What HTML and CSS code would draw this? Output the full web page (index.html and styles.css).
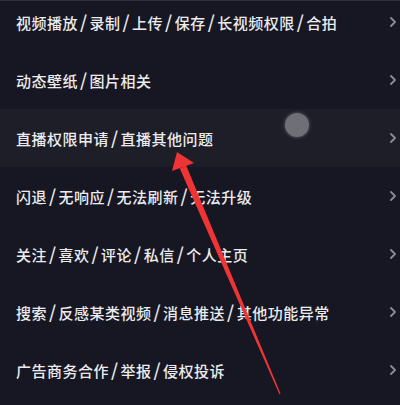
FILE: index.html
```
<!DOCTYPE html>
<html lang="zh-CN">
<head>
  <meta charset="UTF-8" />
  <meta name="viewport" content="width=device-width, initial-scale=1" />
  <title>反馈问题</title>
  <link rel="stylesheet" href="styles.css">
</head>
<body>
  <div class="screen">
    <ul class="list">
      <li class="row"><span class="label">视频播放<i>/</i>录制<i>/</i>上传<i>/</i>保存<i>/</i>长视频权限<i>/</i>合拍</span><svg class="chev" viewBox="0 0 6 10"><polyline points="1,1 5,5 1,9" /></svg></li>
      <li class="row"><span class="label">动态壁纸<i>/</i>图片相关</span><svg class="chev" viewBox="0 0 6 10"><polyline points="1,1 5,5 1,9" /></svg></li>
      <li class="row active"><span class="label">直播权限申请<i>/</i>直播其他问题</span><svg class="chev" viewBox="0 0 6 10"><polyline points="1,1 5,5 1,9" /></svg></li>
      <li class="row"><span class="label">闪退<i>/</i>无响应<i>/</i>无法刷新<i>/</i>无法升级</span><svg class="chev" viewBox="0 0 6 10"><polyline points="1,1 5,5 1,9" /></svg></li>
      <li class="row"><span class="label">关注<i>/</i>喜欢<i>/</i>评论<i>/</i>私信<i>/</i>个人主页</span><svg class="chev" viewBox="0 0 6 10"><polyline points="1,1 5,5 1,9" /></svg></li>
      <li class="row"><span class="label">搜索<i>/</i>反感某类视频<i>/</i>消息推送<i>/</i>其他功能异常</span><svg class="chev" viewBox="0 0 6 10"><polyline points="1,1 5,5 1,9" /></svg></li>
      <li class="row"><span class="label">广告商务合作<i>/</i>举报<i>/</i>侵权投诉</span><svg class="chev" viewBox="0 0 6 10"><polyline points="1,1 5,5 1,9" /></svg></li>
    </ul>

    <!-- touch indicator -->
    <div class="touch"></div>

    <!-- annotation arrow -->
    <svg class="arrow" viewBox="0 0 400 405">
      <polygon points="179.8,168.4 186.2,165.6 280.6,393.8 279.4,394.2" />
      <polygon points="177,152 194,163 172,171" />
    </svg>
  </div>
</body>
</html>
```

FILE: styles.css
```
html, body {
  margin: 0;
  height: 100%;
  background: #161722;
}
body {
  font-family: "Noto Sans CJK SC", "Noto Sans", sans-serif;
  color: #ececef;
  overflow: hidden;
}
.screen {
  position: relative;
  height: 405px;
  border-top: 1px solid #2e2f38;
  box-sizing: border-box;
}
.list {
  list-style: none;
  margin: -8px 0 0 0;
  padding: 0;
}
.row {
  height: 58px;
  display: flex;
  align-items: center;
  justify-content: space-between;
  padding: 0 4px 0 16px;
}
.row.active {
  background: #1d1e28;
}
.label {
  font-size: 15px;
  line-height: 20px;
  font-weight: 500;
  letter-spacing: 0.5px;
  white-space: nowrap;
}
.label i {
  font-style: normal;
  font-size: 18px;
  line-height: 1;
  margin: 0 2px;
}
.chev {
  width: 6px;
  height: 10px;
}
.chev polyline {
  fill: none;
  stroke: #8b8c93;
  stroke-width: 1.8;
  stroke-linecap: round;
  stroke-linejoin: round;
}
.touch {
  position: absolute;
  left: 285px;
  top: 112px;
  width: 24px;
  height: 24px;
  border-radius: 50%;
  background: #6f6f78;
  box-shadow: 0 0 3px 1px rgba(111, 111, 120, 0.5);
}
.arrow {
  position: absolute;
  left: 0;
  top: -1px;
  width: 400px;
  height: 405px;
}
.arrow polygon {
  fill: #ee3434;
}
```
